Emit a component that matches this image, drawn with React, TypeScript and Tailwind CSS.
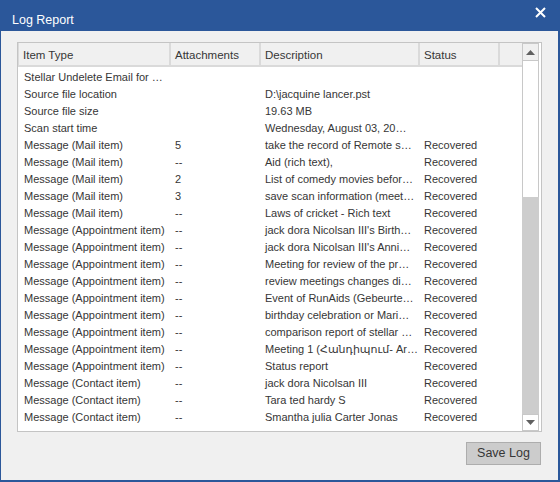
import React from "react";

const rows: [string, string, string, string][] = [
  ["Stellar Undelete Email for …", "", "", ""],
  ["Source file location", "", "D:\\jacquine lancer.pst", ""],
  ["Source file size", "", "19.63 MB", ""],
  ["Scan start time", "", "Wednesday, August 03, 20…", ""],
  ["Message (Mail item)", "5", "take the record of Remote s…", "Recovered"],
  ["Message (Mail item)", "--", "Aid (rich text),", "Recovered"],
  ["Message (Mail item)", "2", "List of comedy movies befor…", "Recovered"],
  ["Message (Mail item)", "3", "save scan information (meet…", "Recovered"],
  ["Message (Mail item)", "--", "Laws of cricket - Rich text", "Recovered"],
  ["Message (Appointment item)", "--", "jack dora Nicolsan III's Birth…", "Recovered"],
  ["Message (Appointment item)", "--", "jack dora Nicolsan III's Anni…", "Recovered"],
  ["Message (Appointment item)", "--", "Meeting for review of the pr…", "Recovered"],
  ["Message (Appointment item)", "--", "review meetings changes di…", "Recovered"],
  ["Message (Appointment item)", "--", "Event of RunAids (Gebeurte…", "Recovered"],
  ["Message (Appointment item)", "--", "birthday celebration or Mari…", "Recovered"],
  ["Message (Appointment item)", "--", "comparison report of stellar …", "Recovered"],
  ["Message (Appointment item)", "--", "Meeting 1 (Հանդիպում- Ar…", "Recovered"],
  ["Message (Appointment item)", "--", "Status report", "Recovered"],
  ["Message (Contact item)", "--", "jack dora Nicolsan III", "Recovered"],
  ["Message (Contact item)", "--", "Tara ted hardy S", "Recovered"],
  ["Message (Contact item)", "--", "Smantha julia Carter Jonas", "Recovered"],
];

const font = { fontFamily: '"Liberation Sans", "DejaVu Sans", sans-serif' };

export default function App() {
  return (
    <div
      className="w-[560px] h-[482px] flex flex-col bg-[#f0f0f0] border-l border-r-2 border-b-2 border-[#2b579a] text-[11px] text-[#363636]"
      style={font}
    >
      <div className="h-[31px] shrink-0 bg-[#2b579a] flex items-center justify-between pl-[11px] pr-[11px]">
        <span className="text-white text-[12.5px] pt-[10px]">Log Report</span>
        <svg width="11" height="11" viewBox="0 0 11 11" className="mb-[6px] mr-[1px]">
          <path d="M1 1 L10 10 M10 1 L1 10" stroke="white" strokeWidth="2" />
        </svg>
      </div>
      <div className="flex-1 flex flex-col pl-4 pr-4 pt-[11px]">
        <div className="h-[390px] w-[525px] border border-[#c4c4c4] flex bg-white overflow-hidden">
          <div className="flex-1 flex flex-col overflow-hidden">
            <div className="h-[24px] shrink-0 flex bg-[#f0f0f0] border-b-2 border-[#dadada] text-[11.5px]">
              <div className="w-[152px] border-x border-[#dadada] pl-[4px] pt-[3px] flex items-center">Item Type</div>
              <div className="w-[90px] border-x border-[#dadada] pl-[4px] pt-[3px] flex items-center">Attachments</div>
              <div className="w-[159px] border-x border-[#dadada] pl-[4px] pt-[3px] flex items-center">Description</div>
              <div className="w-[80px] border-x border-[#dadada] pl-[4px] pt-[3px] flex items-center">Status</div>
              <div className="flex-1 border-l border-[#dadada]" />
            </div>
            <div className="flex flex-col pt-[2px]">
              {rows.map((r, i) => (
                <div key={i} className="h-[17px] shrink-0 flex items-center whitespace-nowrap">
                  <div className="w-[152px] pl-[6px] overflow-hidden">{r[0]}</div>
                  <div className="w-[90px] pl-[5px] overflow-hidden">{r[1]}</div>
                  <div className="w-[159px] pl-[5px] overflow-hidden">{r[2]}</div>
                  <div className="w-[80px] pl-[5px] overflow-hidden">{r[3]}</div>
                </div>
              ))}
            </div>
          </div>
          <div className="w-[17px] mr-[2px] flex flex-col bg-[#f0f0f0]">
            <div className="h-[18px] shrink-0 border border-[#c8c8c8] bg-[#f0f0f0] flex items-center justify-center">
              <svg width="9" height="5" viewBox="0 0 9 5"><path d="M0 5 L4.5 0 L9 5 Z" fill="#606060" /></svg>
            </div>
            <div className="h-[136px] shrink-0 bg-white border-x border-[#c8c8c8]" />
            <div className="flex-1 bg-[#cdcdcd]" />
            <div className="h-[17px] shrink-0 border border-[#c8c8c8] bg-white flex items-center justify-center">
              <svg width="9" height="5" viewBox="0 0 9 5"><path d="M0 0 L4.5 5 L9 0 Z" fill="#606060" /></svg>
            </div>
          </div>
        </div>
        <div className="flex justify-end pt-[10px] pr-px">
          <button className="w-[75px] h-[23px] bg-[#cccccc] border border-[#adadad] text-[12.5px] text-[#363636]">
            Save Log
          </button>
        </div>
      </div>
    </div>
  );
}
